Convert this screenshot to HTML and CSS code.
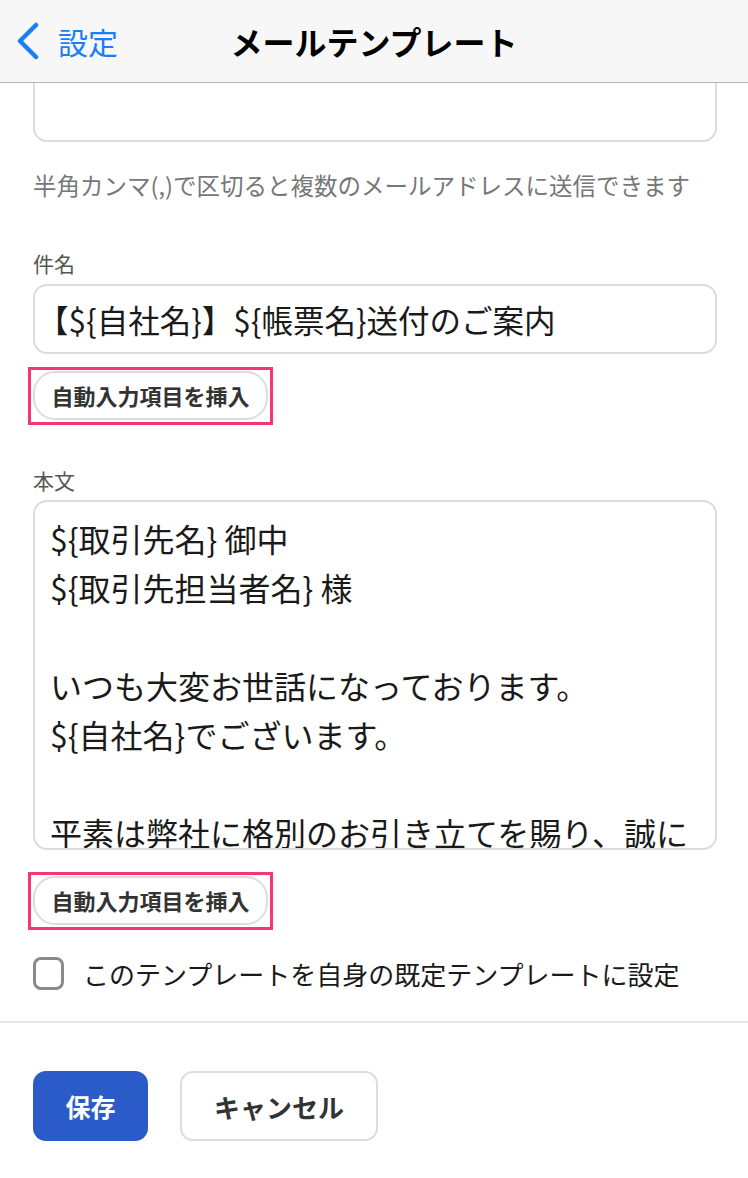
FILE: index.html
```html
<!DOCTYPE html>
<html lang="ja">
<head>
    <meta charset="UTF-8">
    <meta name="viewport" content="width=device-width, initial-scale=1.0">
    <title>メールテンプレート</title>
    <link rel="stylesheet" href="styles.css">
</head>
<body>
    <header class="nav-bar">
        <a class="back" href="#">
            <svg class="chevron" width="26" height="38" viewBox="0 0 26 38">
                <polyline points="21,3 5,19 21,35" fill="none" stroke="#1a7ff5" stroke-width="4.5" stroke-linecap="round" stroke-linejoin="round"/>
            </svg>
            <span>設定</span>
        </a>
        <h1 class="nav-title">メールテンプレート</h1>
        <div></div>
    </header>

    <main class="form">
        <div class="field field-to"></div>
        <p class="hint">半角カンマ(,)で区切ると複数のメールアドレスに送信できます</p>

        <label class="label">件名</label>
        <div class="field field-subject">【${自社名}】${帳票名}送付のご案内</div>
        <div class="highlight">
            <button class="insert-btn">自動入力項目を挿入</button>
        </div>

        <label class="label label-body">本文</label>
        <div class="field field-body">
            ${取引先名} 御中<br>
            ${取引先担当者名} 様<br>
            <br>
            いつも大変お世話になっております。<br>
            ${自社名}でございます。<br>
            <br>
            平素は弊社に格別のお引き立てを賜り、誠に
        </div>
        <div class="highlight highlight-body">
            <button class="insert-btn">自動入力項目を挿入</button>
        </div>

        <div class="check-row">
            <span class="checkbox"></span>
            <span class="check-label">このテンプレートを自身の既定テンプレートに設定</span>
        </div>
    </main>

    <footer class="actions">
        <button class="btn-save">保存</button>
        <button class="btn-cancel">キャンセル</button>
    </footer>
</body>
</html>
```

FILE: styles.css
```css
body {
    margin: 0;
    background: #fff;
    font-family: "Noto Sans CJK JP", "Noto Sans", sans-serif;
    color: #1a1a1a;
    overflow: hidden;
}
.nav-bar {
    position: relative;
    z-index: 1;
    height: 82px;
    background: #f7f7f7;
    border-bottom: 1px solid #b4b4b4;
    display: grid;
    grid-template-columns: 1fr auto 1fr;
    align-items: center;
}
.back {
    display: flex;
    align-items: center;
    padding-left: 15px;
    color: #1a7ff5;
    text-decoration: none;
    font-size: 30px;
}
.back span {
    margin-left: 17px;
}
.nav-title {
    margin: 0;
    font-size: 32px;
    font-weight: 700;
    color: #000;
}
.form {
    padding: 0 31px 0 33px;
}
.field {
    box-sizing: border-box;
    border: 2px solid #dcdcdc;
    border-radius: 14px;
    background: #fff;
}
.field-to {
    height: 100px;
    margin-top: -41px;
}
.hint {
    margin: 28px 0 0;
    font-size: 23.5px;
    line-height: 30px;
    color: #777;
}
.label {
    display: block;
    margin-top: 48px;
    font-size: 21px;
    line-height: 30px;
    color: #555;
}
.field-subject {
    margin-top: 6px;
    height: 70px;
    padding-left: 2px;
    font-size: 31.5px;
    line-height: 66px;
    color: #1a1a1a;
}
.highlight {
    display: inline-block;
    margin: 13px 0 0 -5px;
    padding: 1px 2px 2px;
    border: 3px solid #f7356f;
}
.insert-btn {
    display: block;
    width: 235px;
    height: 49px;
    border: 2px solid #dcdcdc;
    border-radius: 22px;
    background: #fff;
    font-family: inherit;
    font-size: 22px;
    line-height: 45px;
    font-weight: 700;
    color: #333;
    padding: 0;
}
.label-body {
    margin-top: 40px;
}
.field-body {
    margin-top: 5px;
    height: 350px;
    padding: 12px 15px 0;
    overflow: hidden;
    font-size: 32px;
    line-height: 49px;
}
.highlight-body {
    margin-top: 22px;
}
.check-row {
    display: flex;
    align-items: center;
    margin-top: 27px;
}
.checkbox {
    box-sizing: border-box;
    width: 31px;
    height: 33px;
    border: 3px solid #8a8a8a;
    border-radius: 8px;
}
.check-label {
    margin-left: 19px;
    font-size: 26px;
    line-height: 33px;
}
.actions {
    margin-top: 31px;
    border-top: 2px solid #e6e6e6;
    padding: 48px 33px 0;
    display: flex;
    gap: 32px;
}
.actions button {
    height: 70px;
    font-family: inherit;
    font-weight: 700;
    border-radius: 13px;
    padding: 0;
}
.btn-save {
    width: 115px;
    border: none;
    background: #2a5bc8;
    color: #fff;
    font-size: 25px;
}
.btn-cancel {
    width: 198px;
    border: 2px solid #dcdcdc;
    background: #fff;
    color: #333;
    font-size: 26px;
}
```
